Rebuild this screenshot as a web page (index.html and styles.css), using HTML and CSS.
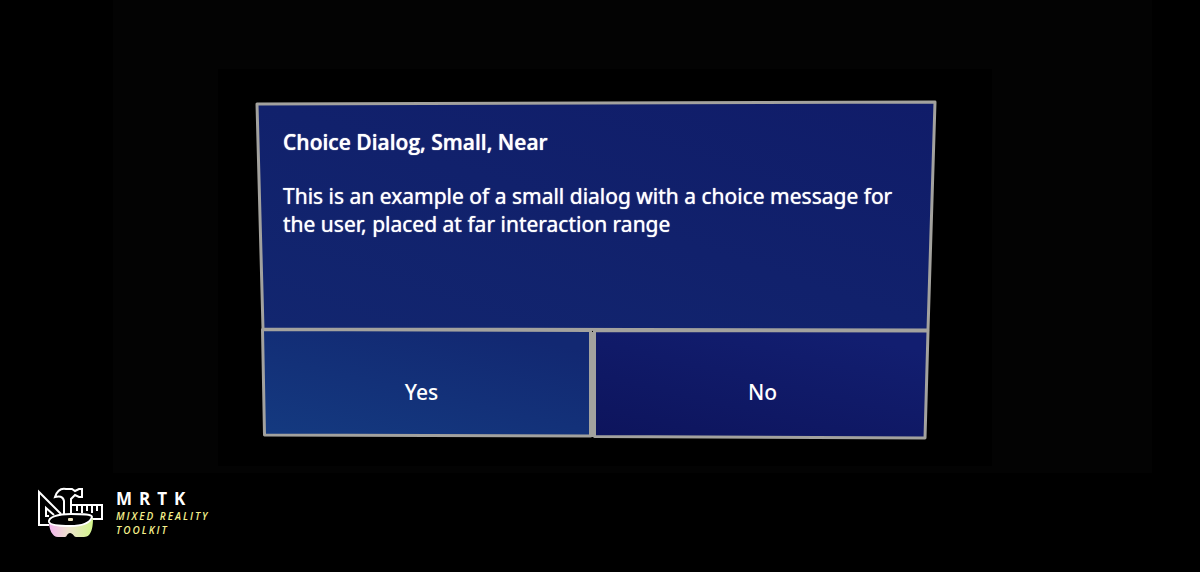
FILE: index.html
```html
<!DOCTYPE html>
<html lang="en">
<head>
<meta charset="utf-8">
<meta name="viewport" content="width=device-width, initial-scale=1">
<title>MRTK Choice Dialog</title>
<link rel="stylesheet" href="styles.css">
</head>
<body class="page">
<main class="scene">
  <div class="backdrop">
    <section class="dialog" role="dialog" aria-labelledby="dialog-title" aria-describedby="dialog-message">
      <svg class="dialog-frame" viewBox="0 0 682 340" preserveAspectRatio="none" aria-hidden="true">
        <defs>
          <linearGradient id="panel" x1="0" y1="1" x2="1" y2="0">
            <stop offset="0" stop-color="#12266f"/>
            <stop offset="1" stop-color="#101c69"/>
          </linearGradient>
          <linearGradient id="yes" x1="0" y1="1" x2="0.7" y2="0">
            <stop offset="0" stop-color="#143a80"/>
            <stop offset="1" stop-color="#122872"/>
          </linearGradient>
          <linearGradient id="no" x1="0" y1="1" x2="0.7" y2="0">
            <stop offset="0" stop-color="#0d145c"/>
            <stop offset="1" stop-color="#121e70"/>
          </linearGradient>
        </defs>
        <g class="frame-lines">
          <path fill="url(#panel)" d="M2 4L680 2L673 230L8 229Z"/>
          <path fill="url(#yes)" d="M7.500 229.500L335.500 230.500V336L9.500 335Z"/>
          <path fill="url(#no)" d="M339.500 230.500L673 231L670 338L339.500 336.500Z"/>
          <path d="M337.500 232V337"/>
        </g>
      </svg>
      <div class="dialog-body">
        <h1 class="dialog-title" id="dialog-title">Choice Dialog, Small, Near</h1>
        <p class="dialog-message" id="dialog-message">This is an example of a small dialog with a choice message for the user, placed at far interaction range</p>
      </div>
      <div class="dialog-actions">
        <button class="dialog-button" type="button">Yes</button>
        <button class="dialog-button" type="button">No</button>
      </div>
    </section>
  </div>
</main>
<footer class="brand">
  <svg class="brand-icon" viewBox="8 6 66 52" aria-hidden="true">
    <defs>
      <linearGradient id="lens" x1="0" x2="1">
        <stop offset="0" stop-color="#f3b4ee"/>
        <stop offset="0.45" stop-color="#ece2cc"/>
        <stop offset="1" stop-color="#d2f58a"/>
      </linearGradient>
    </defs>
    <g class="tool-lines">
      <path d="M19 45H9V12L31 34"/>
      <path d="M19 36H16V28L24 35"/>
      <path d="M34 35V21C33 16 29 16 25 17C27 11 31 8 36 9H42L45 11L49 9H52V17H49L45 15L41 19V35"/>
      <path d="M41 25H72V39H62M47 26V31M52 26V33M57 26V31M62 26V33M67 26V31"/>
    </g>
    <path fill="url(#lens)" d="M19 42C24 48 56 48 63 38C63 46 62 57 54 57H46C44 57 43 53 40 53S37 57 35 57H28C22 57 19 49 19 42Z"/>
    <path class="visor" d="M19 42C18 37 28 34 41 34C54 34 62 34 62 37C60 43 51 46 40 46C28 46 20 45 19 42Z"/>
    <rect fill="#efe4bd" x="38" y="38" width="5" height="3" rx="1"/>
  </svg>
  <div class="brand-text">
    <strong class="brand-name">MRTK</strong>
    <span class="brand-tagline">MIXED REALITY<br>TOOLKIT</span>
  </div>
</footer>
</body>
</html>
```

FILE: styles.css
```css
* {
  box-sizing: border-box;
}

.page {
  margin: 0;
  min-height: 100vh;
  background: #000;
  color: #fff;
  font-family: "Noto Sans", "Open Sans", sans-serif;
}

.scene {
  margin: 0 4% 0 113px;
  padding: 69px 160px 7px 105px;
  background: #030303;
}

.backdrop {
  padding: 31px 55px 26px 37px;
  background: #000;
}

.dialog {
  position: relative;
  display: grid;
  grid-template-rows: minmax(230px, auto) 110px;
}

.dialog-frame {
  position: absolute;
  inset: 0;
  width: 100%;
  height: 100%;
}

.frame-lines {
  stroke: #a3a29e;
  stroke-width: 3px;
  stroke-linejoin: round;
}

.dialog-body {
  position: relative;
  padding: 28px 28px 20px 28px;
}

.dialog-title {
  margin: 0 0 26px;
  font-family: "Open Sans", "Noto Sans", sans-serif;
  font-size: 21px;
  line-height: 28px;
  font-weight: 600;
  text-shadow: 0 0 1px #fff;
}

.dialog-message {
  margin: 0;
  font-size: 21px;
  line-height: 28px;
  font-weight: 400;
  text-shadow: 0 0 1px #fff;
}

.dialog-actions {
  position: relative;
  display: grid;
  grid-template-columns: 1fr 1fr;
}

.dialog-button {
  padding: 14px 8px 0 0;
  border: 0;
  background: none;
  color: inherit;
  font-family: inherit;
  font-size: 21px;
  line-height: 28px;
  font-weight: 500;
  cursor: pointer;
}

.brand {
  display: flex;
  gap: 12px;
  padding: 13px 38px 24px;
}

.brand-icon {
  width: 66px;
  height: 52px;
  flex: none;
}

.tool-lines {
  fill: #000;
  stroke: #fff;
  stroke-width: 2px;
}

.visor {
  fill: #000;
  stroke: #fff;
  stroke-width: 2px;
}

.brand-text {
  display: flex;
  flex-direction: column;
  padding-top: 3px;
  font-family: "Open Sans", "Noto Sans", sans-serif;
}

.brand-name {
  font-size: 17px;
  line-height: 20px;
  font-weight: 700;
  letter-spacing: 7px;
}

.brand-tagline {
  color: #f5f08c;
  font-size: 10px;
  line-height: 14px;
  font-weight: 600;
  font-style: italic;
  letter-spacing: 2px;
}
```
